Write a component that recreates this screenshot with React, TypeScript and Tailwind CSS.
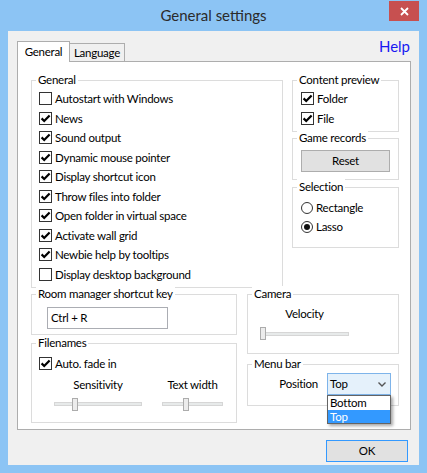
import type { ReactNode } from "react";

function Group({ label, className, children }: { label: string; className: string; children?: ReactNode }) {
  return (
    <div className={"relative border border-[#DCDCDC] " + className}>
      <span className="absolute -top-[9px] left-[4px] bg-white px-[2px] leading-[15px] whitespace-nowrap">{label}</span>
      {children}
    </div>
  );
}

function Box({ checked }: { checked?: boolean }) {
  return (
    <span className="w-[13px] h-[13px] shrink-0 border border-[#333333] bg-white flex items-center justify-center">
      {checked && (
        <svg width="11" height="11" viewBox="0 0 11 11">
          <path d="M1.6 5.4 4.2 8 9.6 2.4" fill="none" stroke="#000" strokeWidth="2.2" />
        </svg>
      )}
    </span>
  );
}

function Check({ label, checked }: { label: string; checked?: boolean }) {
  return (
    <div className="flex items-center h-[19.5px]">
      <Box checked={checked} />
      <span className="ml-[3px] leading-[15px] whitespace-nowrap">{label}</span>
    </div>
  );
}

function Radio({ label, selected }: { label: string; selected?: boolean }) {
  return (
    <div className="flex items-center h-[19px]">
      <span className="w-[12px] h-[12px] shrink-0 rounded-full border border-[#333333] bg-white flex items-center justify-center">
        {selected && <span className="w-[6px] h-[6px] rounded-full bg-[#111]" />}
      </span>
      <span className="ml-[3px] leading-[15px]">{label}</span>
    </div>
  );
}

function Slider({ className, thumb }: { className: string; thumb: string }) {
  return (
    <div className={"relative h-[13px] " + className}>
      <div className="mt-[4.5px] h-[4px] bg-[#E7EAEA] border border-[#D6D6D6]" />
      <div className={"absolute top-0 w-[6px] h-[13px] bg-[#ECECEC] border border-[#ACACAC] " + thumb} />
    </div>
  );
}

const general = [
  { label: "Autostart with Windows", checked: false },
  { label: "News", checked: true },
  { label: "Sound output", checked: true },
  { label: "Dynamic mouse pointer", checked: true },
  { label: "Display shortcut icon", checked: true },
  { label: "Throw files into folder", checked: true },
  { label: "Open folder in virtual space", checked: true },
  { label: "Activate wall grid", checked: true },
  { label: "Newbie help by tooltips", checked: true },
  { label: "Display desktop background", checked: false },
];

export default function App() {
  return (
    <div className="w-[427px] h-[473px] bg-[#8CC4F4] flex flex-col text-[11.5px] tracking-[-0.25px] text-black font-['Segoe_UI','Lato',sans-serif]">
      {/* Title bar */}
      <div className="h-[31px] shrink-0 grid grid-cols-[1fr_auto_1fr]">
        <div />
        <div className="flex items-center text-[15px] tracking-normal text-[#2b2b2b]">General settings</div>
        <div className="flex justify-end">
          <div className="mt-[1px] mr-[8px] w-[30px] h-[20px] bg-[#C75050] flex items-center justify-center">
            <svg width="9" height="9" viewBox="0 0 9 9">
              <path d="M1 1 8 8M8 1 1 8" stroke="#fff" strokeWidth="1.8" />
            </svg>
          </div>
        </div>
      </div>

      {/* Client area */}
      <div className="mx-[8px] mb-[8px] flex-1 bg-[#F0F0F0] flex flex-col pt-[10px] pl-[9px] pr-[8px]">
        {/* Tabs */}
        <div className="flex items-end h-[20px]">
          <div className="relative z-10 w-[53px] h-[21px] -mb-[1px] bg-white border border-b-0 border-[#ADADAD] flex items-center justify-center pb-[1px]">
            General
          </div>
          <div className="w-[55px] h-[18px] bg-[#F0F0F0] border border-l-0 border-b-0 border-[#ADADAD] flex items-center justify-center">
            Language
          </div>
          <div className="ml-auto self-start -mt-[4px] mr-[1px] text-[15px] tracking-normal leading-[18px] text-[#1818F2]">Help</div>
        </div>

        {/* Tab panel */}
        <div className="h-[369px] bg-white border border-[#ADADAD] pt-[18px] pl-[13px] pr-[11px]">
          <div className="flex gap-[9px]">
            <Group label="General" className="w-[252px] h-[208px] pt-[8px] pl-[7px]">
              {general.map((g) => (
                <Check key={g.label} label={g.label} checked={g.checked} />
              ))}
            </Group>

            <div className="w-[107px] flex flex-col">
              <Group label="Content preview" className="h-[52px] pt-[8px] pl-[8px]">
                <Check label="Folder" checked />
                <Check label="File" checked />
              </Group>
              <Group label="Game records" className="mt-[6px] h-[42px] pt-[11px] pl-[8px]">
                <div className="w-[89px] h-[22px] bg-[#E1E1E1] border border-[#ADADAD] flex items-center justify-center">
                  Reset
                </div>
              </Group>
              <Group label="Selection" className="mt-[7px] h-[61px] pt-[10px] pl-[8px]">
                <Radio label="Rectangle" />
                <Radio label="Lasso" selected />
              </Group>
            </div>
          </div>

          <div className="mt-[6px] flex gap-[10px]">
            <div className="w-[206px] flex flex-col">
              <Group label="Room manager shortcut key" className="h-[41px] pt-[12px] pl-[15px]">
                <div className="w-[121px] h-[22px] border border-[#ABADB3] bg-white flex items-center pl-[3px]">
                  Ctrl + R
                </div>
              </Group>
              <Group label="Filenames" className="mt-[8px] h-[80px] pt-[10px] pl-[7px]">
                <Check label="Auto. fade in" checked />
                <div className="flex mt-[3px]">
                  <div className="ml-[15px] w-[88px] flex flex-col items-center">
                    <span className="leading-[15px]">Sensitivity</span>
                    <Slider className="mt-[6px] w-[88px]" thumb="left-[18px]" />
                  </div>
                  <div className="ml-[20px] w-[61px] flex flex-col items-center">
                    <span className="leading-[15px] whitespace-nowrap">Text width</span>
                    <Slider className="mt-[6px] w-[61px]" thumb="left-[21px]" />
                  </div>
                </div>
              </Group>
            </div>

            <div className="w-[152px] flex flex-col">
              <Group label="Camera" className="h-[60px] pt-[11px] pl-[12px]">
                <div className="w-[89px] flex flex-col items-center">
                  <span className="leading-[15px]">Velocity</span>
                  <Slider className="mt-[6px] w-[89px]" thumb="left-0" />
                </div>
              </Group>
              <Group label="Menu bar" className="mt-[10px] h-[42px] pt-[8px] pr-[7px]">
                <div className="flex items-center justify-end">
                  <span className="mr-[9px]">Position</span>
                  <div className="relative z-20 w-[64px] h-[22px] bg-[#E5F1FB] border border-[#7EB4EA] flex items-center pl-[2px]">
                    <span>Top</span>
                    <svg className="ml-auto mr-[4px]" width="8" height="5" viewBox="0 0 8 5">
                      <path d="M0.5 0.5 4 4 7.5 0.5" fill="none" stroke="#555" strokeWidth="1.4" />
                    </svg>
                    <div className="absolute left-[-1px] top-[21px] w-[64px] bg-white border border-[#646464] shadow-[2px_2px_3px_rgba(0,0,0,0.35)] flex flex-col">
                      <span className="h-[13.5px] leading-[13.5px] pl-[2px]">Bottom</span>
                      <span className="h-[13.5px] leading-[13.5px] pl-[2px] bg-[#3399FF] text-white">Top</span>
                    </div>
                  </div>
                </div>
              </Group>
            </div>
          </div>
        </div>

        {/* Buttons */}
        <div className="mt-[10px] flex justify-end pr-[3px]">
          <div className="w-[82px] h-[22px] bg-[#E1E1E1] border border-[#3399FF] flex items-center justify-center">OK</div>
        </div>
      </div>
    </div>
  );
}
